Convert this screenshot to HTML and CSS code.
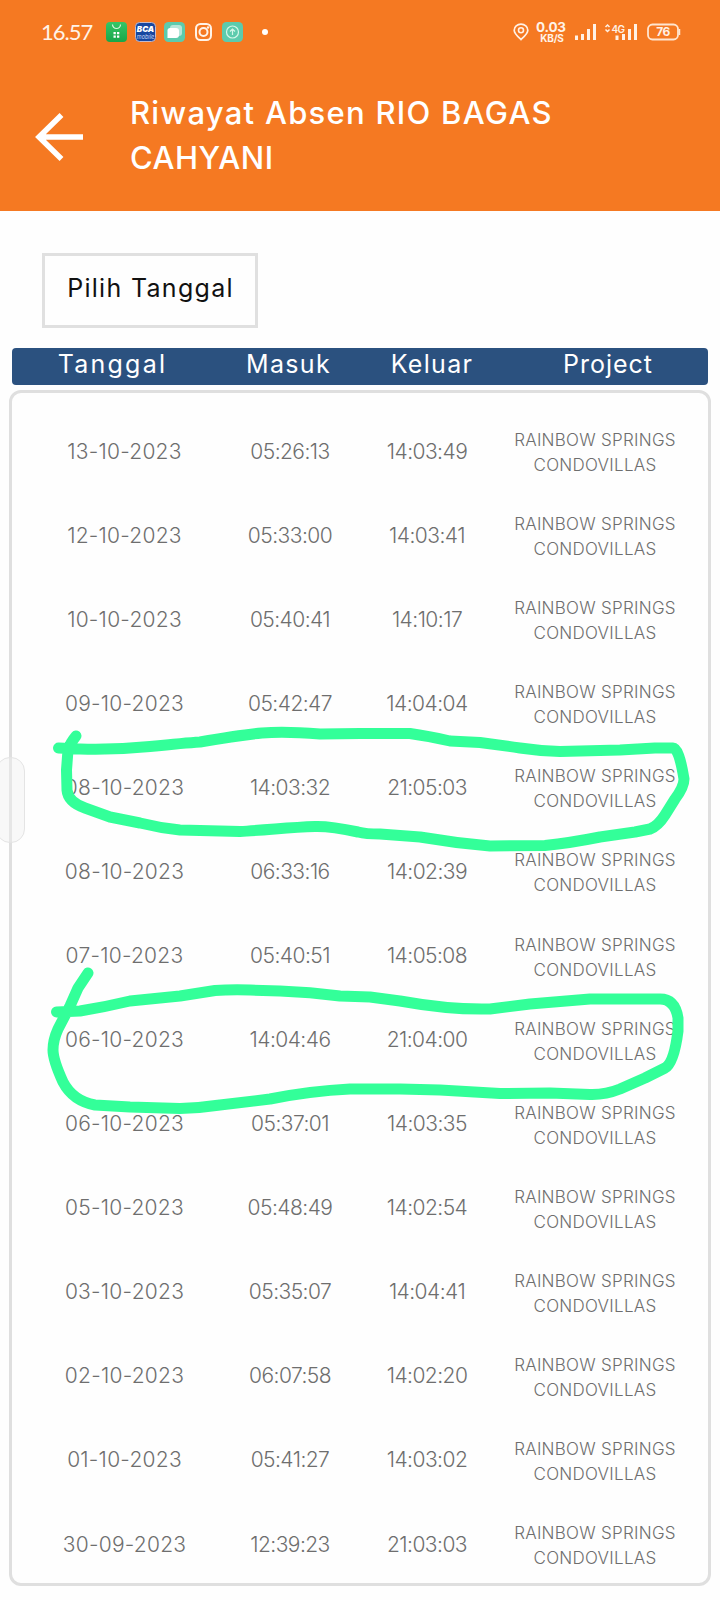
FILE: index.html
```html
<!DOCTYPE html>
<html lang="id">
<head>
<meta charset="utf-8">
<title>Riwayat Absen</title>
<link rel="stylesheet" href="styles.css">
</head>
<body>
<div class="screen">
  <header class="top">
    <div class="status">
      <span class="clock">16.57</span>
      <svg class="apps" width="170" height="24" viewBox="0 0 170 24">
        <defs><linearGradient id="g" x2="0" y2="1"><stop stop-color="#35c667"/><stop offset="1" stop-color="#17a648"/></linearGradient></defs>
        <rect x="0" y="2" width="21" height="20" rx="4" fill="url(#g)"/>
        <path d="M6.500 4.500a4 4 0 0 0 8 0" fill="none" stroke="#d8f6df" stroke-width="1.200"/>
        <path d="M7.500 12h2.300v2.300H7.500zM11 12h2.300v2.300H11zM7.500 15.500h2.300v2.300H7.500zM11 15.500h2.300v2.300H11z" fill="#fff"/>
        <rect x="29.500" y="2.500" width="20" height="19" rx="4" fill="#1747a0" stroke="#c5b9c9"/>
        <text x="39.500" y="12" class="bca">BCA</text>
        <text x="39.500" y="18.500" class="mobile">mobile</text>
        <rect x="58" y="2" width="21" height="20" rx="4.500" fill="#5ccbad"/>
        <rect x="64" y="5" width="12" height="11" rx="3" fill="#b5e7da"/>
        <path d="M64 8h6a3 3 0 0 1 3 3v4a3 3 0 0 1-3 3h-8.500v-7.500a2.500 2.500 0 0 1 2.500-2.500z" fill="#fff"/>
        <g fill="none" stroke="#fff3e8" stroke-width="2">
          <rect x="90" y="4" width="15" height="16" rx="4.500"/>
          <circle cx="97.500" cy="12" r="4"/>
        </g>
        <circle cx="102" cy="7.500" r="1.200" fill="#fff3e8"/>
        <rect x="116" y="2" width="21" height="20" rx="4.500" fill="#5ccbad"/>
        <g fill="none" stroke="#d5f6e9" stroke-width="1.200">
          <circle cx="126.500" cy="12" r="6"/>
          <path d="M126.500 15V9m-2.500 2.500 2.500-2.500 2.500 2.500"/>
        </g>
        <circle cx="159" cy="12" r="3" fill="#fff"/>
      </svg>
      <svg class="pin" width="16" height="18" viewBox="0 0 16 18">
        <path d="M8 16.500C4.500 13.300 1.200 10.500 1.200 7.200a6.800 6 0 0 1 13.600 0C14.800 10.500 11.500 13.300 8 16.500z" fill="none" stroke="#fff1e6" stroke-width="1.700"/>
        <circle cx="8" cy="7.200" r="2.500" fill="none" stroke="#fff1e6" stroke-width="1.600"/>
      </svg>
      <div class="rate"><span>0.03</span><small>KB/S</small></div>
      <svg class="signals" width="64" height="20" viewBox="0 0 64 20">
        <path d="M2.500 13.500v4.500M8.500 12v6M14.500 7v11M20.500 2v16M43 13.500v4.500M49.500 12v6M55.500 7v11M61.500 2v16" stroke="#fff1e6" stroke-width="3"/>
        <path d="M31.500 5 33.500 3 35.500 5M31.500 7.500 33.500 9.500l2-2" fill="none" stroke="#fff1e6" stroke-width="1.500"/>
        <text x="37.500" y="11" class="net">4G</text>
      </svg>
      <svg class="battery" width="34" height="18" viewBox="0 0 34 18">
        <rect x="1" y="1.500" width="30" height="15" rx="4.500" fill="none" stroke="#ffe5d0" stroke-width="1.800"/>
        <path d="M32.500 6v6" stroke="#ffe5d0" stroke-width="1.500"/>
        <text x="16" y="13.200" class="charge">76</text>
      </svg>
    </div>
    <div class="appbar">
      <svg width="48" height="48" viewBox="0 0 48 48"><path d="M48 24H5M26.500 2 4 24l22.500 22" fill="none" stroke="#fff" stroke-width="5.500"/></svg>
      <h1><span class="t1">Riwayat Absen RIO BAGAS</span><br><span class="t2">CAHYANI</span></h1>
    </div>
  </header>
  <main>
    <button class="pick">Pilih Tanggal</button>
    <div class="head"><span class="h1c">Tanggal</span><span class="h2c">Masuk</span><span class="h3c">Keluar</span><span class="h4c">Project</span></div>
    <section class="card">
      <div class="row"><span class="date">13-10-2023</span><span>05:26:13</span><span>14:03:49</span><p>RAINBOW SPRINGS <br>CONDOVILLAS</p></div>
      <div class="row"><span class="date">12-10-2023</span><span>05:33:00</span><span>14:03:41</span><p>RAINBOW SPRINGS <br>CONDOVILLAS</p></div>
      <div class="row"><span class="date">10-10-2023</span><span>05:40:41</span><span>14:10:17</span><p>RAINBOW SPRINGS <br>CONDOVILLAS</p></div>
      <div class="row"><span class="date">09-10-2023</span><span>05:42:47</span><span>14:04:04</span><p>RAINBOW SPRINGS <br>CONDOVILLAS</p></div>
      <div class="row"><span class="date">08-10-2023</span><span>14:03:32</span><span>21:05:03</span><p>RAINBOW SPRINGS <br>CONDOVILLAS</p></div>
      <div class="row"><span class="date">08-10-2023</span><span>06:33:16</span><span>14:02:39</span><p>RAINBOW SPRINGS <br>CONDOVILLAS</p></div>
      <div class="row"><span class="date">07-10-2023</span><span>05:40:51</span><span>14:05:08</span><p>RAINBOW SPRINGS <br>CONDOVILLAS</p></div>
      <div class="row"><span class="date">06-10-2023</span><span>14:04:46</span><span>21:04:00</span><p>RAINBOW SPRINGS <br>CONDOVILLAS</p></div>
      <div class="row"><span class="date">06-10-2023</span><span>05:37:01</span><span>14:03:35</span><p>RAINBOW SPRINGS <br>CONDOVILLAS</p></div>
      <div class="row"><span class="date">05-10-2023</span><span>05:48:49</span><span>14:02:54</span><p>RAINBOW SPRINGS <br>CONDOVILLAS</p></div>
      <div class="row"><span class="date">03-10-2023</span><span>05:35:07</span><span>14:04:41</span><p>RAINBOW SPRINGS <br>CONDOVILLAS</p></div>
      <div class="row"><span class="date">02-10-2023</span><span>06:07:58</span><span>14:02:20</span><p>RAINBOW SPRINGS <br>CONDOVILLAS</p></div>
      <div class="row"><span class="date">01-10-2023</span><span>05:41:27</span><span>14:03:02</span><p>RAINBOW SPRINGS <br>CONDOVILLAS</p></div>
      <div class="row"><span class="date">30-09-2023</span><span>12:39:23</span><span>21:03:03</span><p>RAINBOW SPRINGS <br>CONDOVILLAS</p></div>
    </section>
  </main>
  <div class="handle"></div>
  <svg class="ink" width="720" height="1600" viewBox="0 0 720 1600">
    <path d="M58.500 748 80 749 Q115 750 150 746.500 T200 742 Q240 735 262 733 T320 734 L360 733.500 410 733.500Q428 736 450 741 L480 742.500Q500 745 520 748 T560 751.500 L620 750 655 748 673 748Q679 748 684 779Q684 787 675 799L665 815Q658 826 650 829L635 832 600 837Q570 843 545 845.500L490 846Q455 843 420 837 L380 834Q366 834 358 832Q330 826 315 826.500T275 829 T240 831.500 L180 830Q160 828 140 823L110 817 85 808Q68 802 67 790L66.500 770 68 750Q70 743 76 736"/>
    <path d="M56.500 1012 80 1011Q105 1007 130 1001L180 996 215 990.500Q230 989.500 250 990L280 991Q310 992 340 996L370 997 400 1001Q450 1010 490 1009L530 1004 590 999 660 999Q675 999 678 1018L678 1031Q674 1063 665 1068L645 1078 620 1089Q605 1095 590 1094.500L550 1093 500 1093.500 440 1090 400 1089 350 1089Q310 1091 270 1099L220 1105Q200 1108 180 1108.500L130 1107 95 1105Q73 1101 63 1082Q53 1060 53 1050Q53 1040 58 1029L70 1006 78 988 88 973"/>
  </svg>
</div>
</body>
</html>
```
FILE: styles.css
```css
* { box-sizing: border-box; }
body { margin: 0; background: #fefefe; font-family: Inter, "Noto Sans", sans-serif; }
.screen { position: relative; width: 720px; height: 1600px; overflow: hidden; }
.top { height: 211px; background: #f57922; color: #fff; }
.status { display: flex; align-items: center; height: 64px; padding-left: 41px; color: #fff3e8; }
.clock { width: 65px; font: 400 22px/24px Lato, sans-serif; letter-spacing: -1px; }
.pin { margin-left: 237px; }
.rate { display: flex; flex-direction: column; width: 31px; margin-left: 7px; font-weight: 700; font-size: 13.500px; line-height: 11px; letter-spacing: -.2px; }
.rate small { padding-left: 1px; font-size: 10px; line-height: 10px; text-align: center; }
.signals { margin-left: 7px; }
.battery { margin-left: 9px; }
.bca { font: italic 900 8px Inter, sans-serif; fill: #fff; text-anchor: middle; }
.mobile { font: italic 400 5.500px Inter, sans-serif; fill: #c9d6f3; text-anchor: middle; }
.net { font: 600 10px Inter, sans-serif; fill: #fff1e6; letter-spacing: -.7px; }
.charge { font: 700 12px Inter, sans-serif; fill: #fff1e6; text-anchor: middle; letter-spacing: -.6px; }
.appbar { display: flex; align-items: flex-start; padding: 26px 0 0 35px; }
.appbar svg { margin-top: 23px; }
h1 { margin: 0 0 0 47px; font-size: 31px; line-height: 45px; font-weight: 500; white-space: nowrap; }
.t1 { letter-spacing: 1.270px; }
.t2 { letter-spacing: .500px; }
main { padding: 42px 9px 0; }
.pick { display: block; width: 216px; height: 75px; margin: 0 0 20px 33px; padding: 0 0 5px 1px; border: 3px solid #e0e0e0; background: #fefefe; color: #111; font: 400 25px Inter, sans-serif; letter-spacing: 1.300px; }
.head { display: grid; grid-template-columns: 201px 151px 136px 1fr; height: 37px; margin: 0 3px 5px; border-radius: 4px; background: #2b517f; color: #fff; font-size: 25px; line-height: 33px; text-align: center; letter-spacing: 1.300px; }
.h1c { letter-spacing: 2.200px; }
.h4c { padding-left: 8px; letter-spacing: 1px; }
.card { height: 1196px; padding-top: 17px; border: 3px solid #dfdfdf; border-radius: 12px; }
.row { display: grid; grid-template-columns: 225px 106px 168px 168px; align-items: center; height: 84.080px; color: #6e6e6e; font-size: 21px; font-weight: 300; text-align: center; white-space: nowrap; }
.row span { padding-bottom: 2px; letter-spacing: -.550px; }
.row .date { letter-spacing: .250px; }
.row p { margin: 2px 0 0; font-size: 17px; line-height: 25px; letter-spacing: .270px; }
.handle { position: absolute; left: -4px; top: 757px; width: 29px; height: 86px; border: 1px solid #e4e4e4; border-radius: 14px; background: rgba(240, 240, 240, .4); }
.ink { position: absolute; left: 0; top: 0; fill: none; stroke: #33ff99; stroke-width: 11px; stroke-linecap: round; stroke-linejoin: round; }
```
